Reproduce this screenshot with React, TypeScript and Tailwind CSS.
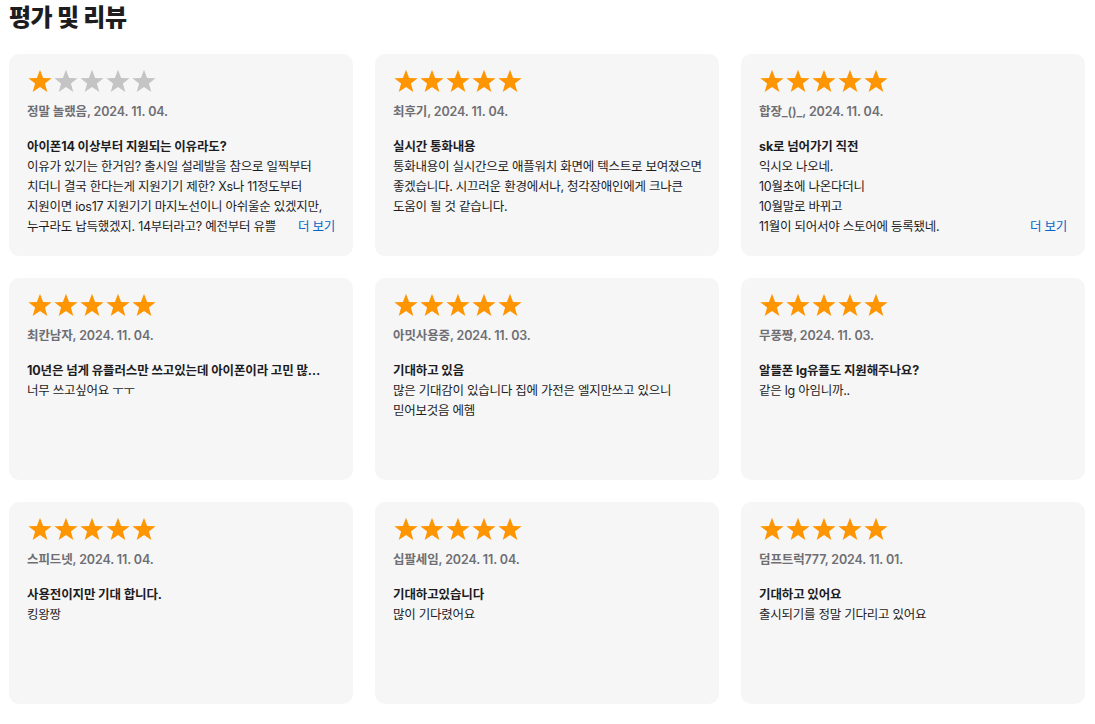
import React from "react";

type Review = {
  rating: number;
  author: string;
  date: string;
  title: string;
  body: string[];
  more?: boolean;
};

const reviews: Review[] = [
  {
    rating: 1,
    author: "정말 놀랬음",
    date: "2024. 11. 04.",
    title: "아이폰14 이상부터 지원되는 이유라도?",
    body: [
      "이유가 있기는 한거임? 출시일 설레발을 참으로 일찍부터",
      "치더니 결국 한다는게 지원기기 제한? Xs나 11정도부터",
      "지원이면 ios17 지원기기 마지노선이니 아쉬울순 있겠지만,",
      "누구라도 납득했겠지. 14부터라고? 예전부터 유쁠",
    ],
    more: true,
  },
  {
    rating: 5,
    author: "최후기",
    date: "2024. 11. 04.",
    title: "실시간 통화내용",
    body: [
      "통화내용이 실시간으로 애플워치 화면에 텍스트로 보여졌으면",
      "좋겠습니다. 시끄러운 환경에서나, 청각장애인에게 크나큰",
      "도움이 될 것 같습니다.",
    ],
  },
  {
    rating: 5,
    author: "합장_()_",
    date: "2024. 11. 04.",
    title: "sk로 넘어가기 직전",
    body: ["익시오 나오네.", "10월초에 나온다더니", "10월말로 바뀌고", "11월이 되어서야 스토어에 등록됐네."],
    more: true,
  },
  {
    rating: 5,
    author: "최칸남자",
    date: "2024. 11. 04.",
    title: "10년은 넘게 유플러스만 쓰고있는데 아이폰이라 고민 많…",
    body: ["너무 쓰고싶어요 ㅜㅜ"],
  },
  {
    rating: 5,
    author: "아밋사용중",
    date: "2024. 11. 03.",
    title: "기대하고 있음",
    body: ["많은 기대감이 있습니다 집에 가전은 엘지만쓰고 있으니", "믿어보것음 에헴"],
  },
  {
    rating: 5,
    author: "무풍짱",
    date: "2024. 11. 03.",
    title: "알뜰폰 lg유플도 지원해주나요?",
    body: ["같은 lg 아임니까.."],
  },
  {
    rating: 5,
    author: "스피드넷",
    date: "2024. 11. 04.",
    title: "사용전이지만 기대 합니다.",
    body: ["킹왕짱"],
  },
  {
    rating: 5,
    author: "십팔세임",
    date: "2024. 11. 04.",
    title: "기대하고있습니다",
    body: ["많이 기다렸어요"],
  },
  {
    rating: 5,
    author: "덤프트럭777",
    date: "2024. 11. 01.",
    title: "기대하고 있어요",
    body: ["출시되기를 정말 기다리고 있어요"],
  },
];

function Star({ filled }: { filled: boolean }) {
  return (
    <svg width="26" height="25" viewBox="0 0 26 25" className="block">
      <polygon
        points="13,0.8 16.1,8.9 24.6,9.2 17.9,14.5 20.3,22.9 13,18 5.7,22.9 8.1,14.5 1.4,9.2 9.9,8.9"
        fill={filled ? "#ff9500" : "#c4c4c4"}
      />
    </svg>
  );
}

function Card({ r }: { r: Review }) {
  return (
    <div className="h-[202px] rounded-[10px] bg-[#f6f6f6] px-[18px] pt-[15px] overflow-hidden">
      <div className="flex">
        {[0, 1, 2, 3, 4].map((i) => (
          <Star key={i} filled={i < r.rating} />
        ))}
      </div>
      <div className="mt-[10px] text-[12.5px] leading-[16px] font-semibold text-[#6e6e73] tracking-[-0.01em]">
        {r.author}, {r.date}
      </div>
      <div className="mt-[17px] text-[12.5px] leading-[20px] font-bold text-[#1d1d1f] tracking-[-0.01em] truncate">
        {r.title}
      </div>
      <div className="text-[12.5px] leading-[20px] text-[#1d1d1f] tracking-[-0.02em] whitespace-nowrap">
        {r.body.map((line, i) => {
          const last = i === r.body.length - 1;
          if (last && r.more) {
            return (
              <div key={i} className="flex justify-between">
                <span>{line}</span>
                <span className="text-[#0066cc]">더 보기</span>
              </div>
            );
          }
          return <div key={i}>{line}</div>;
        })}
      </div>
    </div>
  );
}

export default function App() {
  return (
    <div
      className="bg-white w-[1095px] h-[724px] px-[9px] pt-[1px]"
      style={{ fontFamily: 'Inter, "Noto Sans CJK KR", sans-serif' }}
    >
      <h1 className="text-[24px] leading-[34px] font-extrabold text-[#1d1d1f] tracking-[-0.02em]">평가 및 리뷰</h1>
      <div className="mt-[19px] grid grid-cols-3 gap-x-[22px] gap-y-[22px] w-[1076px]">
        {reviews.map((r, i) => (
          <Card key={i} r={r} />
        ))}
      </div>
    </div>
  );
}
